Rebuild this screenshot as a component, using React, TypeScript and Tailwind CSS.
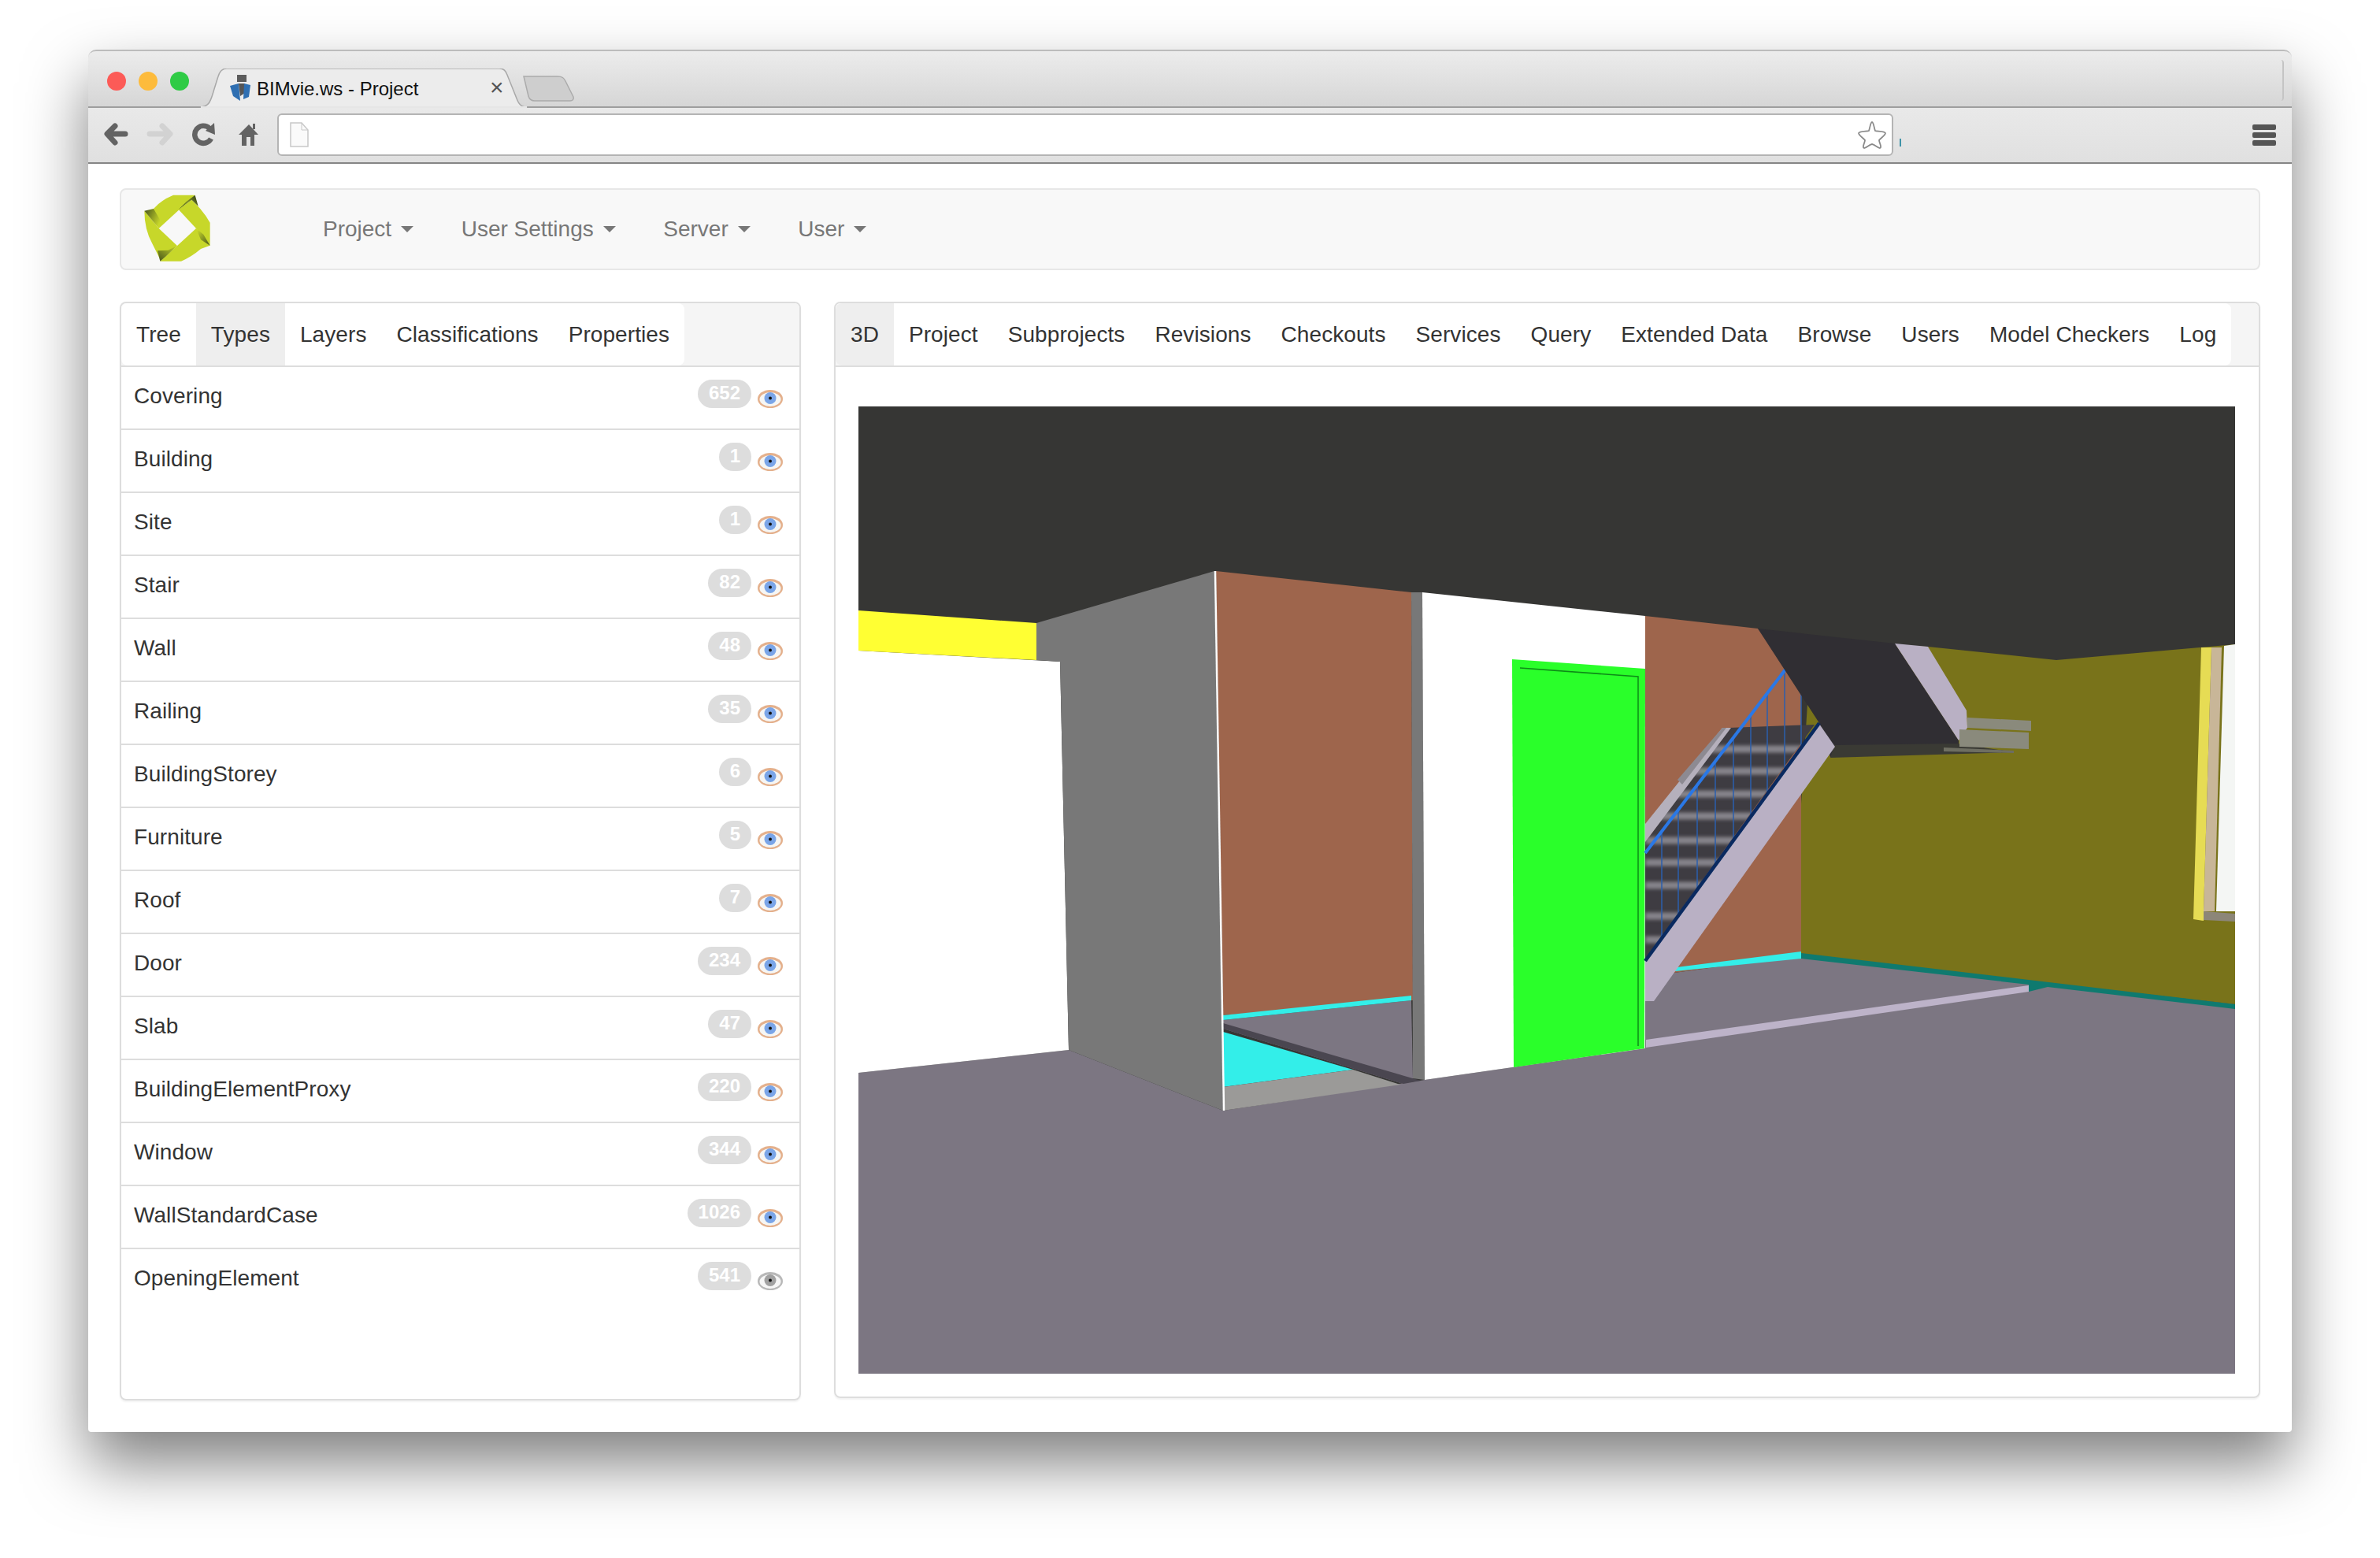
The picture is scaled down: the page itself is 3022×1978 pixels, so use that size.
import React from 'react';

const types: [string, number][] = [
  ['Covering', 652], ['Building', 1], ['Site', 1], ['Stair', 82], ['Wall', 48],
  ['Railing', 35], ['BuildingStorey', 6], ['Furniture', 5], ['Roof', 7], ['Door', 234],
  ['Slab', 47], ['BuildingElementProxy', 220], ['Window', 344], ['WallStandardCase', 1026], ['OpeningElement', 541],
];
const leftTabs = ['Tree', 'Types', 'Layers', 'Classifications', 'Properties'];
const rightTabs = ['3D', 'Project', 'Subprojects', 'Revisions', 'Checkouts', 'Services', 'Query', 'Extended Data', 'Browse', 'Users', 'Model Checkers', 'Log'];
const menus = ['Project', 'User Settings', 'Server', 'User'];

// scene faces, painted back to front, in page coordinates
const backFaces: [string, string][] = [
  ['#7c7682', '1090,1362 1357,1333 1553,1410 1809,1371 2089,1331 2089,1240 2287,1213 2838,1275 2838,1744 1090,1744'],
  ['#ffffff', '1090,826 1346,840 1357,1333 1090,1362'],
  ['#ffff33', '1090,775 1316,791 1316,838 1090,826'],
  ['#787878', '1316,791 1542,725 1553,1410 1357,1333 1346,840 1316,838'],
  ['#9e654c', '1544,725 1792,752 1794,1270 1553,1289'],
  ['#7c7682', '1553,1295 1792,1270 1794,1369 1782,1376 1553,1306'],
  ['#33eee9', '1553,1289 1792,1264 1792,1270 1553,1295'],
  ['#33eee9', '1553,1310 1718,1358 1553,1380'],
  ['#9b9a98', '1553,1380 1718,1358 1778,1377 1553,1410'],
  ['#4a4650', '1553,1299 1804,1372 1782,1376 1553,1306'],
  ['#787878', '1792,752 1806,752 1809,1371 1794,1369'],
  ['#ffffff', '1806,752 2089,782 2089,1331 1809,1371'],
  ['#9e654c', '2089,782 2232,798 2287,860 2287,1213 2089,1240'],
  ['#79731a', '2300,815 2448,821 2611,838 2838,818 2838,1275 2287,1213 2287,1020'],
  ['#2aff2a', '1920,837 2089,849 2088,1331 1922,1355'],
  ['#33eee9', '2129,1228 2287,1208 2287,1217 2127,1233'],
  ['#0f7a6f', '2287,1210 2838,1275 2838,1281 2600,1253 2576,1259 2576,1250 2287,1217'],
  ['#bdb3c9', '2090,1320 2576,1251 2576,1259 2090,1330'],
  ['#e6dc54', '2795,822 2808,822 2798,1157 2798,1169 2785,1167'],
  ['#c8b698', '2808,822 2821,822 2812,1157 2798,1157'],
  ['#f4f6f4', '2824,820 2838,818 2838,1157 2814,1157'],
  ['#8c8678', '2798,1157 2838,1160 2838,1170 2798,1168'],
];

const balusters = [2110, 2131, 2155, 2178, 2201, 2223, 2244, 2266, 2287];

function Scene() {
  return (
    <svg viewBox="1090 516 1748 1228" className="block w-[1748px] h-[1228px] bg-[#363634]">
      <defs>
        <clipPath id="steps"><polygon points="2089,1069 2195,924 2304,920 2089,1218" /></clipPath>
        <filter id="soft"><feGaussianBlur stdDeviation="2" /></filter>
      </defs>
      {backFaces.map(([fill, points], i) => (
        <polygon key={i} fill={fill} points={points} />
      ))}
      <line x1="1543" y1="725" x2="1554" y2="1410" stroke="#ffffff" strokeWidth="2.5" />
      <path d="M1930 848 L2080 859 L2080 1328" fill="none" stroke="#0e8a18" strokeWidth="1.5" />
      {/* stair */}
      <polygon points="2089,1069 2195,924 2304,920 2089,1218" fill="#3e3c42" />
      <g clipPath="url(#steps)">
        <g filter="url(#soft)" stroke="#85838a" strokeWidth="9">
          {[951, 979, 1008, 1036, 1067, 1095, 1124, 1163, 1193].map(y => (
            <line key={y} x1="2089" y1={y} x2="2310" y2={y} />
          ))}
        </g>
      </g>
      <polygon points="2089,1046 2187,924 2198,924 2089,1069" fill="#b5b0bc" />
      <polygon points="2130,990 2187,924 2192,924 2136,996" fill="#8d8a92" />
      {balusters.map(x => (
        <line key={x} x1={x} y1={1083 - (x - 2089) * 1.309} x2={x} y2={1220 - (x - 2089) * 1.366} stroke="#2b5fae" strokeWidth="1.5" />
      ))}
      <line x1="2089" y1="1083" x2="2267" y2="850" stroke="#2a78e6" strokeWidth="4" />
      <polygon points="2232,798 2406,817 2487,940 2487,949 2324,961 2310,918" fill="#302e33" />
      <polygon points="2329,946 2487,944 2557,955 2324,962" fill="#3a3a34" />
      <polygon points="2406,817 2448,821 2497,902 2498,924 2487,940" fill="#b9b0c4" />
      <polygon points="2498,911 2579,915 2579,928 2498,924" fill="#8a8a7c" />
      <polygon points="2488,926 2576,930 2576,951 2488,948" fill="#8a8a7c" />
      <polygon points="2468,949 2557,953 2557,956 2468,954" fill="#6e6e62" />
      <polygon points="2310,919 2330,948 2100,1271 2089,1271 2089,1220" fill="#b9b0c4" />
      <line x1="2089" y1="1220" x2="2310" y2="918" stroke="#0a2a60" strokeWidth="4.5" />
    </svg>
  );
}

function Logo() {
  return (
    <svg viewBox="0 0 300 300" className="w-[100px] h-[100px] shrink-0">
      <defs>
        <linearGradient id="f1" x1="0" y1="0" x2="1" y2="0.55">
          <stop offset="0" stopColor="#46531a" /><stop offset="1" stopColor="#c7d72a" />
        </linearGradient>
        <linearGradient id="f2" x1="0" y1="1" x2="1" y2="0.5">
          <stop offset="0" stopColor="#4d5b1c" /><stop offset="0.6" stopColor="#7f8f22" /><stop offset="1" stopColor="#46531a" />
        </linearGradient>
        <linearGradient id="f3" x1="1" y1="1" x2="0.1" y2="0.1">
          <stop offset="0" stopColor="#46531a" /><stop offset="1" stopColor="#c7d72a" />
        </linearGradient>
        <linearGradient id="f4" x1="1" y1="0" x2="0" y2="1">
          <stop offset="0" stopColor="#c7d72a" /><stop offset="1" stopColor="#46531a" />
        </linearGradient>
      </defs>
      <path d="M25 80 Q25 150 55 205 L85 265 L150 213 L80 147 Z" fill="#c7d72a" />
      <path d="M60 72 Q90 38 135 20 L218 20 L80 147 Z" fill="#c7d72a" />
      <path d="M205 38 Q250 80 275 125 L275 212 L222 147 L155 75 Z" fill="#c7d72a" />
      <path d="M222 147 L275 212 L240 225 Q205 255 165 272 L85 272 L150 213 Z" fill="#c7d72a" />
      <polygon points="25,80 60,72 88,120 80,147" fill="url(#f1)" />
      <polygon points="218,20 230,62 205,38 155,75 185,45" fill="url(#f2)" />
      <polygon points="275,212 240,190 222,147 250,170" fill="url(#f3)" />
      <polygon points="150,213 105,255 85,272 75,232 115,230" fill="url(#f4)" />
    </svg>
  );
}

function Eye({ gray }: { gray?: boolean }) {
  return (
    <svg viewBox="0 0 32 25" className={`w-[32px] h-[25px] mt-[28px] ml-[8px] shrink-0 ${gray ? 'grayscale' : ''}`}>
      <ellipse cx="16" cy="12.5" rx="16" ry="11.5" fill="#e4b08c" />
      <ellipse cx="16" cy="13" rx="13.5" ry="9" fill="#f6f6f4" />
      <circle cx="16" cy="11.5" r="7.5" fill="#7aa5e8" />
      <circle cx="16" cy="11.5" r="2" fill="#111111" />
    </svg>
  );
}

function TabBar({ tabs, active }: { tabs: string[]; active: string }) {
  return (
    <div className="flex h-[81px] bg-[#f5f5f5] border-b-2 border-[#dddddd] rounded-t-[6px]">
      <div className="flex bg-white rounded-[8px] overflow-hidden">
        {tabs.map(t => (
          <div key={t} className={`pt-[22px] px-[19px] text-[28px] leading-[36px] tracking-[0.08px] text-[#333333] ${t === active ? 'bg-[#eeeeee]' : ''}`}>{t}</div>
        ))}
      </div>
    </div>
  );
}

function NavIcons() {
  return (
    <svg viewBox="130 150 200 44" className="w-[200px] h-[44px] shrink-0 ml-[18px]" fill="none" strokeLinecap="round" strokeLinejoin="round">
      <path d="M159 171 H138 M146 161 L136 171 L146 182" stroke="#636363" strokeWidth="7" />
      <path d="M190 171 H211 M206 161 L216 171 L206 182" stroke="#d2d2d2" strokeWidth="7" />
      <path d="M266 164 A11 11 0 1 0 268 177" stroke="#636363" strokeWidth="6.5" strokeLinecap="butt" />
      <polygon points="261,167 272,157 273,172" fill="#636363" />
      <path d="M303 172 L316 159 L328 172 L323 172 L323 186 L318 186 L318 175 L313 175 L313 186 L307 186 L307 172 Z" fill="#636363" />
      <rect x="321" y="158" width="3" height="7" fill="#636363" />
    </svg>
  );
}

export default function App() {
  return (
    <div className="w-[3022px] h-[1978px] bg-white pt-[63px] pl-[112px] overflow-hidden font-['Liberation_Sans',Arial,sans-serif]">
      <div className="w-[2798px] h-[1755px] flex flex-col bg-white rounded-t-[10px] rounded-b-[4px] shadow-[0_40px_80px_rgba(0,0,0,0.5)]">
        {/* tab strip */}
        <div className="relative h-[74px] flex items-start shrink-0 rounded-t-[10px] border-t-2 border-[#bcbcbc] border-b-2 border-b-[#9e9e9e] bg-gradient-to-b from-[#ececec] to-[#d6d6d6]">
          <div className="flex gap-[16px] mt-[26px] ml-[24px]">
            <span className="w-[24px] h-[24px] rounded-full bg-[#fc5b57]" />
            <span className="w-[24px] h-[24px] rounded-full bg-[#fdbb3c]" />
            <span className="w-[24px] h-[24px] rounded-full bg-[#2fcb45]" />
          </div>
          <div className="relative ml-[14px] mt-[22px] w-[416px] h-[49px]">
            <svg viewBox="0 0 416 50" className="absolute inset-0 w-[416px] h-[50px]">
              <path d="M0 49 C12 49 14 40 18 26 L23 10 C25 3 28 0 34 0 H380 C386 0 388 3 390 8 L402 38 C405 46 408 49 416 49 Z" fill="#ececec" stroke="#a8a8a8" strokeWidth="1.5" />
              <rect x="1" y="48" width="414" height="4" fill="#e6e6e6" />
            </svg>
            <svg viewBox="290 92 30 38" className="absolute left-[35px] top-[6px] w-[30px] h-[38px]">
              <rect x="302" y="94" width="12" height="9" fill="#5c5c5c" />
              <polygon points="293,108 304,105 306,127 297,121" fill="#2f6fb2" />
              <polygon points="304,105 312,105 312,117 306,121" fill="#555555" />
              <polygon points="311,105 319,107 317,122 310,125" fill="#2f6fb2" />
            </svg>
            <span className="absolute left-[72px] top-[10px] text-[24px] leading-[32px] text-[#111111] whitespace-nowrap">BIMvie.ws - Project</span>
            <span className="absolute left-[368px] top-[7px] text-[30px] leading-[34px] text-[#555555]">×</span>
          </div>
          <svg viewBox="0 0 66 34" className="w-[66px] h-[34px] ml-[-6px] mt-[30px] shrink-0">
            <path d="M1 2 H44 C50 2 52 4 54 8 L64 28 C65 31 63 33 60 33 H15 C10 33 8 31 7 27 Z" fill="#cecece" stroke="#ababab" strokeWidth="1.5" />
          </svg>
          <div className="absolute right-[10px] top-[11px] w-[4px] h-[52px] border-r-2 border-[#c4c4c4] rounded-r-[4px]" />
        </div>
        {/* toolbar */}
        <div className="h-[71px] flex items-start shrink-0 border-b-2 border-[#858585] bg-gradient-to-b from-[#e9e9e9] to-[#e0e0e0]">
          <div className="mt-[12px]"><NavIcons /></div>
          <div className="ml-[22px] mt-[7px] w-[2052px] h-[54px] flex items-center justify-between bg-white border-2 border-[#b4b4b4] rounded-[6px] pl-[14px] pr-[7px]">
            <svg viewBox="0 0 24 32" className="w-[24px] h-[32px]">
              <path d="M1 1 H15 L23 10 V31 H1 Z" fill="#fafafa" stroke="#c8c8c8" strokeWidth="1.5" />
              <path d="M15 1 V10 H23" fill="none" stroke="#c8c8c8" strokeWidth="1" />
            </svg>
            <svg viewBox="0 0 36 36" className="w-[36px] h-[36px]">
              <path d="M18 2 C20 2 21 11 22 13 C24 14 34 13 35 16 C35 19 28 23 27 25 C27 28 31 34 28 35 C26 35 20 30 18 30 C16 30 10 35 8 35 C5 34 9 28 9 25 C8 23 1 19 1 16 C2 13 12 14 14 13 C15 11 16 2 18 2 Z" fill="#ffffff" stroke="#8a8a8a" strokeWidth="1.8" />
            </svg>
          </div>
          <div className="w-[2px] h-[10px] ml-[8px] mt-[39px] bg-[#3f93a8]" />
          <div className="ml-[446px] mt-[21px] flex flex-col gap-[3px]">
            <span className="block w-[30px] h-[7px] rounded-[2px] bg-[#555555]" />
            <span className="block w-[30px] h-[7px] rounded-[2px] bg-[#555555]" />
            <span className="block w-[30px] h-[7px] rounded-[2px] bg-[#555555]" />
          </div>
        </div>
        {/* page */}
        <div className="flex-1 pt-[31px] pl-[40px] pr-[40px]">
          <div className="h-[104px] flex items-center pl-[21px] bg-[#f8f8f8] border-2 border-[#e7e7e7] rounded-[8px]">
            <Logo />
            <div className="flex gap-[60.5px] ml-[135px]">
              {menus.map(m => (
                <div key={m} className="flex items-center gap-[12px] text-[28px] leading-[40px] text-[#777777]">
                  {m}
                  <span className="w-0 h-0 border-x-[8px] border-x-transparent border-t-[8px] border-t-[#777777]" />
                </div>
              ))}
            </div>
          </div>
          <div className="flex items-start gap-[42px] mt-[40px]">
            <div className="w-[865px] h-[1395px] border-2 border-[#dddddd] rounded-[8px] shrink-0 shadow-[0_2px_2px_rgba(0,0,0,0.05)]">
              <TabBar tabs={leftTabs} active="Types" />
              {types.map(([name, n], i) => (
                <div key={name} className={`h-[80px] flex items-start pl-[16px] pr-[21px] ${i < types.length - 1 ? 'border-b-2 border-[#dddddd]' : ''}`}>
                  <span className="flex-1 pt-[17px] text-[28px] leading-[40px] tracking-[0.08px] text-[#333333]">{name}</span>
                  <span className="mt-[16px] h-[36px] px-[14px] rounded-[18px] bg-[#dddddd] text-white font-bold text-[24px] leading-[34px]">{n}</span>
                  <Eye gray={i === types.length - 1} />
                </div>
              ))}
            </div>
            <div className="w-[1811px] h-[1392px] border-2 border-[#dddddd] rounded-[8px] shadow-[0_2px_2px_rgba(0,0,0,0.05)]">
              <TabBar tabs={rightTabs} active="3D" />
              <div className="pl-[29px] pt-[50px]">
                <Scene />
              </div>
            </div>
          </div>
        </div>
      </div>
    </div>
  );
}
